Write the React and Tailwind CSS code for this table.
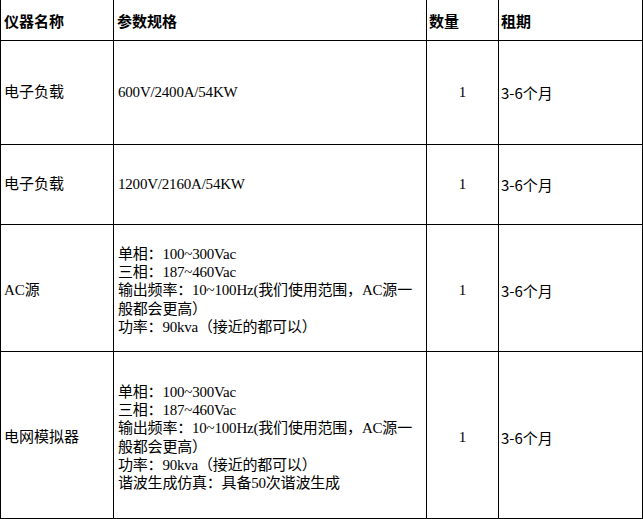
import React from "react";

const serif = "font-['Liberation_Serif','Noto_Sans_CJK_SC',serif]";
const sans = "font-['Noto_Sans_CJK_SC',sans-serif]";

const rows = [
  {
    name: "电子负载",
    spec: ["600V/2400A/54KW"],
    h: "h-[104px]",
    pad: "",
  },
  {
    name: "电子负载",
    spec: ["1200V/2160A/54KW"],
    h: "h-[80px]",
    pad: "",
  },
  {
    name: "AC源",
    spec: [
      "单相：100~300Vac",
      "三相：187~460Vac",
      "输出频率：10~100Hz(我们使用范围，AC源一",
      "般都会更高）",
      "功率：90kva（接近的都可以）",
    ],
    h: "h-[127px]",
    pad: "pt-[5px]",
  },
  {
    name: "电网模拟器",
    spec: [
      "单相：100~300Vac",
      "三相：187~460Vac",
      "输出频率：10~100Hz(我们使用范围，AC源一",
      "般都会更高）",
      "功率：90kva（接近的都可以）",
      "谐波生成仿真：具备50次谐波生成",
    ],
    h: "h-[167px]",
    pad: "pt-[5px]",
  },
];

export default function App() {
  return (
    <div className={`w-[643px] h-[519px] bg-white text-black text-[15px] leading-[19px] ${serif}`}>
      <div className="grid grid-cols-[113px_313px_72px_145px]">
        {/* header */}
        <div className={`h-[41px] border-l border-b border-black flex items-center pl-[3px] font-bold ${sans}`}>仪器名称</div>
        <div className={`h-[41px] border-l border-b border-black flex items-center pl-[3px] font-bold ${sans}`}>参数规格</div>
        <div className={`h-[41px] border-l border-b border-black flex items-center pl-[2px] font-bold ${sans}`}>数量</div>
        <div className={`h-[41px] border-l border-r border-b border-black flex items-center pl-[2px] font-bold ${sans}`}>租期</div>
        {rows.map((r, i) => (
          <React.Fragment key={i}>
            <div className={`${r.h} ${r.pad} border-l border-b border-black flex items-center pl-[3px] whitespace-nowrap`}>{r.name}</div>
            <div className={`${r.h} ${r.pad} border-l border-b border-black flex flex-col justify-center pl-[4px] whitespace-nowrap leading-[18.3px] tracking-[-0.2px]`}>
              {r.spec.map((s, j) => (
                <div key={j}>{s}</div>
              ))}
            </div>
            <div className={`${r.h} ${r.pad} border-l border-b border-black flex items-center justify-center`}>1</div>
            <div className={`${r.h} ${r.pad} border-l border-r border-b border-black flex items-center pl-[2px] whitespace-nowrap ${sans}`}>3-6个月</div>
          </React.Fragment>
        ))}
      </div>
    </div>
  );
}
